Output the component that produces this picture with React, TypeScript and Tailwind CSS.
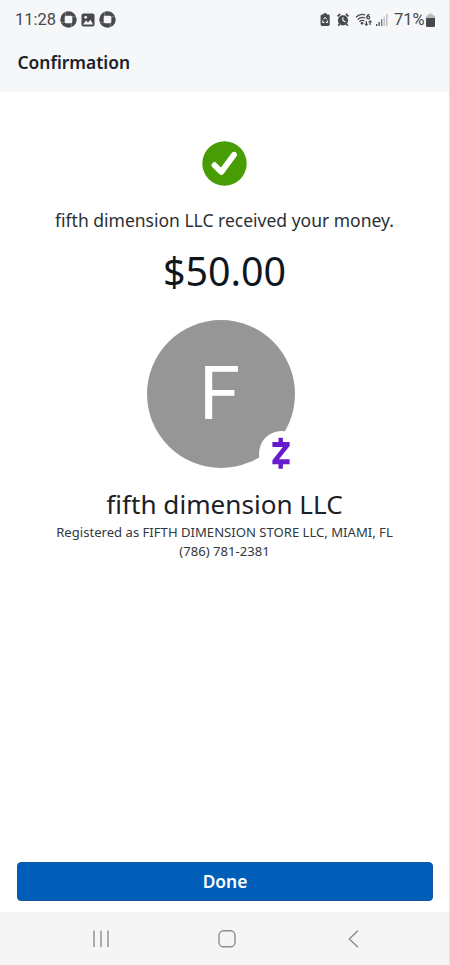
import type { ReactNode } from 'react';

export default function App() {
  return (
    <div className="w-[450px] h-[965px] flex flex-col bg-white text-[#1b2127] font-['Noto_Sans','Open_Sans',sans-serif] border-r border-[#e3e4e6] overflow-hidden">
      <header className="h-[92px] flex-none bg-[#f5f7f9]">
        <StatusBar />
        <h1 className="pl-[17.5px] mt-[10px] text-[17.4px] leading-6 font-semibold">Confirmation</h1>
      </header>

      <main className="flex-1 flex flex-col items-center whitespace-nowrap">
        <SuccessIcon />
        <p className="mt-[22px] text-[17.5px] leading-6 text-[#2a2f34]">
          fifth dimension LLC received your money.
        </p>
        <p className="mt-[15px] text-[39.4px] leading-[48px] text-[#0f161d]">$50.00</p>
        <Avatar />
        <h2 className="mt-[18px] text-[26.1px] leading-9">fifth dimension LLC</h2>
        <p className="mt-px text-[13.1px] leading-[19px] text-[#33383c]">
          Registered as FIFTH DIMENSION STORE LLC, MIAMI, FL
        </p>
        <p className="text-[13.1px] leading-[19px] text-[#33383c]">(786) 781-2381</p>
      </main>

      <div className="flex-none pl-[17px] pr-4 pb-[11px]">
        <button className="w-full h-[39px] pb-[2px] rounded-[4px] border border-[#1456a0] bg-[#005eb8] text-white text-[17.4px] leading-6 font-semibold">
          Done
        </button>
      </div>
      <NavBar />
    </div>
  );
}

const StatusBar = () => (
  <div className="h-10 flex items-center justify-between pl-[15px] pr-[14px] text-[#48494b] font-['Roboto',sans-serif] text-[16.5px] leading-5">
    <div className="flex items-center">
      <span className="w-[45px]">11:28</span>
      <ChaseIcon />
      <svg className="mx-1" width="14" height="14" viewBox="0 0 14 14">
        <rect x="0.5" y="0.5" width="13" height="13" rx="2" fill="#48494b" />
        <path d="M2 11.5 L5 7.5 L7 9.5 L9.5 6.8 L12 11.5Z" fill="#f5f7f9" />
        <circle cx="4.7" cy="4.3" r="1.4" fill="#f5f7f9" />
      </svg>
      <ChaseIcon />
    </div>
    <div className="flex items-center">
      <svg width="72" height="16" viewBox="0 0 72 16" fill="#48494b">
        {/* battery saver */}
        <path d="M3.5 1.2h3.2v1.4h1.6q1.4 0 1.4 1.4v8.5q0 1.4-1.4 1.4H2q-1.4 0-1.4-1.4V4q0-1.4 1.4-1.4h1.5z" />
        <path
          d="M3.5 7.3 L5.1 5.2 L6.7 7.3 M7.1 8.3 L7.7 10.5 H5.8 M4.4 10.5 H2.5 L3.1 8.3"
          fill="none"
          stroke="#f5f7f9"
          strokeWidth="1"
        />
        {/* alarm */}
        <circle cx="23" cy="8.3" r="5.1" />
        <path
          d="M17.6 4.3 L20.1 2 M28.4 4.3 L25.9 2 M19.5 12 L18.3 13.7 M26.5 12 L27.7 13.7"
          stroke="#48494b"
          strokeWidth="1.7"
        />
        <path d="M22.9 5.2 V8.5 L25.5 10" fill="none" stroke="#f5f7f9" strokeWidth="1.1" />
        {/* wifi 6 */}
        <g fill="none" stroke="#48494b" strokeWidth="1.2">
          <path d="M36 5.2 Q40.3 1 45.2 3" />
          <path d="M37.8 7.5 Q41.1 4.4 45.3 6" />
          <path d="M39.4 9.6 Q41.8 7.5 44.4 8.8" />
          <path d="M49.5 2.3 Q46.8 3 46.8 5.4" />
          <circle cx="48.3" cy="5.5" r="1.4" />
          <path d="M46.4 9 V13.2 M50.1 13 V9" />
        </g>
        <path d="M40.2 11 L42 9.8 L43.8 11 L42 13Z" />
        <path d="M44.2 11.8 h4.4 L46.4 14.1Z M47.9 10.2 h4.4 L50.1 7.9Z" />
        {/* signal */}
        <path d="M56 12h1.3v2H56z M58.5 10h1.3v4h-1.3z" />
        <path d="M61 7.3h1.4V14H61z" fill="#77797b" />
        <path d="M63.5 4.8h1.5V14h-1.5z M66 2h1.6v12H66z" fill="#c0c2c4" />
      </svg>
      <span className="ml-[2px] w-[31px]">71%</span>
      <svg className="ml-px" width="9" height="15" viewBox="0 0 9 15">
        <path d="M2.5 0.8h4v1.5H7.6Q9 2.3 9 4v2H0V4Q0 2.3 1.4 2.3h1.1z" fill="#b9bbbd" />
        <path d="M0 5h9v7.5q0 1.5-1.5 1.5h-6Q0 14 0 12.5z" fill="#48494b" />
      </svg>
    </div>
  </div>
);

const ChaseIcon = () => (
  <svg className="mb-px" width="17" height="17" viewBox="0 0 17 17">
    <circle cx="8.5" cy="8.5" r="8.2" fill="#48494b" />
    <path d="M5.8 4.7h5.4l1.1 1.1v5.4l-1.1 1.1H5.8l-1.1-1.1V5.8z" fill="#f5f7f9" />
    <path
      d="M5.5 5.3V0.8M11.8 5.8H16M11.4 11.7V16.2M5.2 11.4H1"
      stroke="#f5f7f9"
      strokeOpacity="0.6"
      strokeWidth="0.5"
    />
  </svg>
);

const SuccessIcon = () => (
  <svg className="mt-[49px]" width="45" height="45" viewBox="0 0 45 45">
    <circle cx="22.5" cy="22.5" r="22.2" fill="#489d05" />
    <path
      d="M12.5 24.2 L19.3 31 L32 13.7"
      fill="none"
      stroke="#fff"
      strokeWidth="5.8"
      strokeLinecap="round"
      strokeLinejoin="round"
    />
  </svg>
);

const Avatar = () => (
  <div className="relative mt-[24.5px] mr-[8px] size-[148px] flex-none rounded-full bg-[#969696] grid place-items-center text-white font-['Roboto',sans-serif] text-[74.5px] leading-none">
    <span className="relative top-px right-px">F</span>
    <div className="absolute left-[112px] top-[111px] size-[45px] rounded-full bg-white">
      <svg className="absolute left-[13px] top-[6px]" width="18" height="33" viewBox="0 0 18 33">
        <path
          d="M6.5 0.8h4.4v4.3h6.7v4L7 22.3h10.6v5h-6.7v4.4H6.5v-4.4H0.4v-4.1L10.8 10H0.4V5.1h6.1z"
          fill="#671bcb"
        />
      </svg>
    </div>
  </div>
);

const NavIcon = ({ children }: { children: ReactNode }) => (
  <svg width="20" height="20" viewBox="0 0 20 20" fill="none" stroke="#8c8d8e" strokeWidth="1.4">
    {children}
  </svg>
);

const NavBar = () => (
  <nav className="h-[53px] flex-none flex items-center justify-between bg-[#f5f5f5] pl-[91px] pr-[86px] pt-px">
    <NavIcon>
      <path d="M3 1.5v16.5M10 1.5v16.5M17 1.5v16.5" />
    </NavIcon>
    <NavIcon>
      <rect x="2" y="1.8" width="16" height="16" rx="4.6" />
    </NavIcon>
    <NavIcon>
      <path d="M15 1.5 L6.3 10 L15 18.3" />
    </NavIcon>
  </nav>
);
